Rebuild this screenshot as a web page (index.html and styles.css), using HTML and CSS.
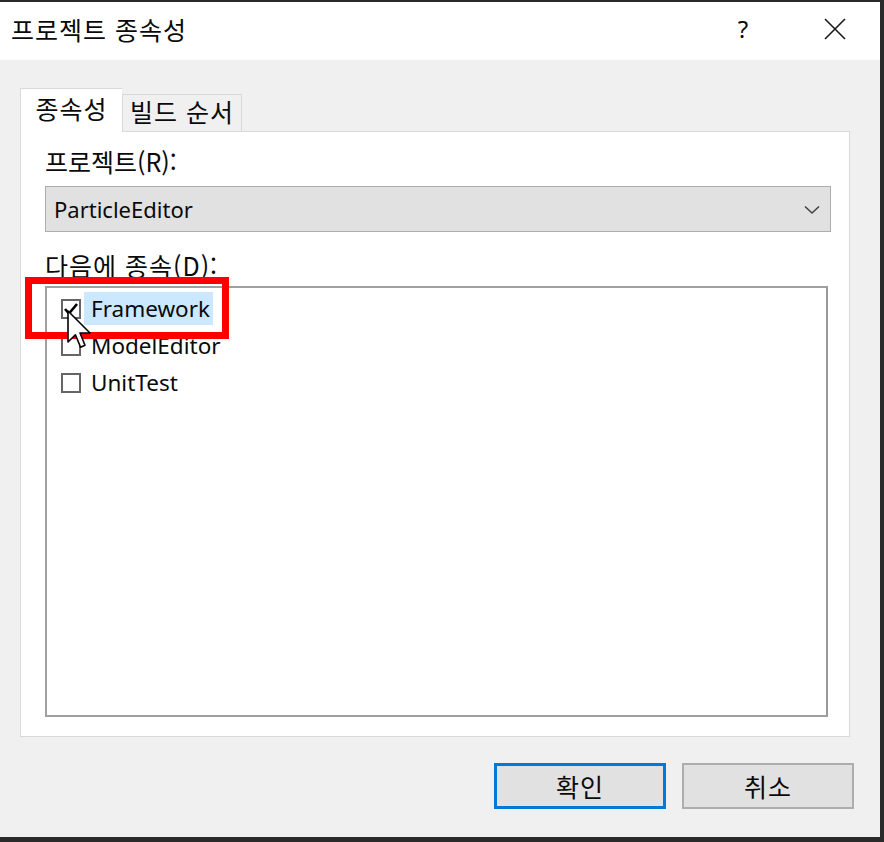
FILE: index.html
```html
<!DOCTYPE html>
<html lang="ko">
<head>
<meta charset="utf-8">
<title>프로젝트 종속성</title>
<link rel="stylesheet" href="styles.css">
</head>
<body>
<div class="window">
  <div class="titlebar">
    <div class="title">프로젝트 종속성</div>
    <div class="tb-btn help">?</div>
    <div class="tb-btn close">
      <svg width="22" height="22" viewBox="0 0 22 22"><path d="M1 1 L21 21 M21 1 L1 21" stroke="#1a1a1a" stroke-width="1.6" fill="none"/></svg>
    </div>
  </div>
  <div class="content">
    <div class="tabs">
      <div class="tab active">종속성</div>
      <div class="tab">빌드 순서</div>
    </div>
    <div class="panel">
      <div class="label">프로젝트(R):</div>
      <div class="combo">
        <span class="combo-text">ParticleEditor</span>
        <svg class="chevron" width="16" height="10" viewBox="0 0 16 10"><path d="M1 1.5 L8 8 L15 1.5" stroke="#444" stroke-width="1.6" fill="none"/></svg>
      </div>
      <div class="label label2">다음에 종속(D):</div>
      <div class="listbox">
        <div class="row">
          <span class="cb checked">
            <svg width="16" height="16" viewBox="0 0 16 16"><path d="M2 8 L6 12.5 L14 3" stroke="#000" stroke-width="2.6" fill="none"/></svg>
          </span>
          <span class="item sel">Framework</span>
        </div>
        <div class="row">
          <span class="cb"></span>
          <span class="item">ModelEditor</span>
        </div>
        <div class="row">
          <span class="cb"></span>
          <span class="item">UnitTest</span>
        </div>
        <div class="highlight-box"></div>
        <svg class="cursor" width="26" height="40" viewBox="0 0 13 20"><path d="M0.5 0.5 L0.5 16 L4.2 12.4 L6.8 18.6 L9 17.6 L6.5 11.5 L11.5 11.5 Z" fill="#fff" stroke="#000" stroke-width="0.8" stroke-linejoin="round"/></svg>
      </div>
    </div>
    <div class="buttons">
      <div class="btn default">확인</div>
      <div class="btn">취소</div>
    </div>
  </div>
</div>
</body>
</html>
```
FILE: styles.css
```css
html, body {
  margin: 0;
  padding: 0;
}
body {
  background: #2a2a2a;
  width: 884px;
  height: 842px;
  padding: 2px 4px 5px 0;
  box-sizing: border-box;
  font-family: "Noto Sans CJK KR", "Noto Sans", sans-serif;
  color: #0a0a0a;
}
.window {
  background: #f0f0f0;
  height: 835px;
  display: flex;
  flex-direction: column;
}
.titlebar {
  height: 58px;
  background: #fff;
  display: flex;
  align-items: center;
}
.title {
  flex: 1;
  padding-left: 11px;
  font-size: 25px;
  letter-spacing: 1px;
  margin-top: -4px;
}
.tb-btn {
  display: flex;
  align-items: center;
  justify-content: center;
}
.help {
  font-family: "Noto Sans", sans-serif;
  font-size: 24px;
  width: 30px;
  margin-right: 62px;
  margin-top: -6px;
}
.close {
  width: 30px;
  margin-right: 30px;
  margin-top: -4px;
}
.content {
  flex: 1;
  display: flex;
  flex-direction: column;
  padding: 28px 30px 0 20px;
}
.tabs {
  display: flex;
  align-items: flex-end;
  height: 43px;
}
.tab {
  height: 37px;
  width: 120px;
  box-sizing: border-box;
  border: 1px solid #d9d9d9;
  border-bottom: none;
  background: #f0f0f0;
  font-size: 25px;
  letter-spacing: 1px;
  display: flex;
  align-items: center;
  justify-content: center;
  padding-bottom: 4px;
}
.tab.active {
  width: 102px;
  background: #fff;
  border-right: none;
  position: relative;
  z-index: 1;
  margin-bottom: -1px;
  height: 44px;
  padding-bottom: 6px;
}
.panel {
  height: 606px;
  box-sizing: border-box;
  background: #fff;
  border: 1px solid #d9d9d9;
  padding: 14px 18px 0 24px;
  display: flex;
  flex-direction: column;
}
.label {
  font-size: 25px;
  height: 30px;
  line-height: 30px;
}
.combo {
  margin-top: 10px;
  height: 46px;
  box-sizing: border-box;
  background: #e1e1e1;
  border: 1px solid #adadad;
  display: flex;
  align-items: center;
  padding: 0 10px 0 8px;
}
.combo-text {
  flex: 1;
  font-family: "Noto Sans", sans-serif;
  font-size: 22px;
}
.chevron {
  margin-top: 2px;
}
.label2 {
  margin-top: 18px;
  letter-spacing: 1px;
}
.listbox {
  position: relative;
  margin-top: 6px;
  width: 783px;
  height: 431px;
  flex-shrink: 0;
  box-sizing: border-box;
  border: 2px solid #a0a0a0;
  border-right-color: #999;
  padding-top: 2px;
}
.row {
  height: 37px;
  display: flex;
  align-items: center;
  padding-left: 14px;
}
.cb {
  width: 20px;
  height: 20px;
  box-sizing: border-box;
  border: 2px solid #666;
  background: #fff;
  display: flex;
  align-items: center;
  justify-content: center;
  margin-right: 3px;
}
.item {
  font-family: "Noto Sans", sans-serif;
  font-size: 22.5px;
  padding: 0 3px 0 7px;
  height: 33px;
  line-height: 33px;
}
.item.sel {
  background: #cce8ff;
}
.highlight-box {
  position: absolute;
  left: -22px;
  top: -11px;
  width: 204px;
  height: 62px;
  box-sizing: border-box;
  border: 7px solid #ff0000;
}
.cursor {
  position: absolute;
  left: 20px;
  top: 22px;
}
.buttons {
  display: flex;
  justify-content: flex-end;
  gap: 16px;
  margin-top: 26px;
  margin-right: -4px;
}
.btn {
  width: 172px;
  height: 46px;
  box-sizing: border-box;
  background: #e1e1e1;
  border: 2px solid #adadad;
  font-size: 25px;
  letter-spacing: 1px;
  display: flex;
  align-items: center;
  justify-content: center;
}
.btn.default {
  border: 3px solid #0078d7;
}
```
